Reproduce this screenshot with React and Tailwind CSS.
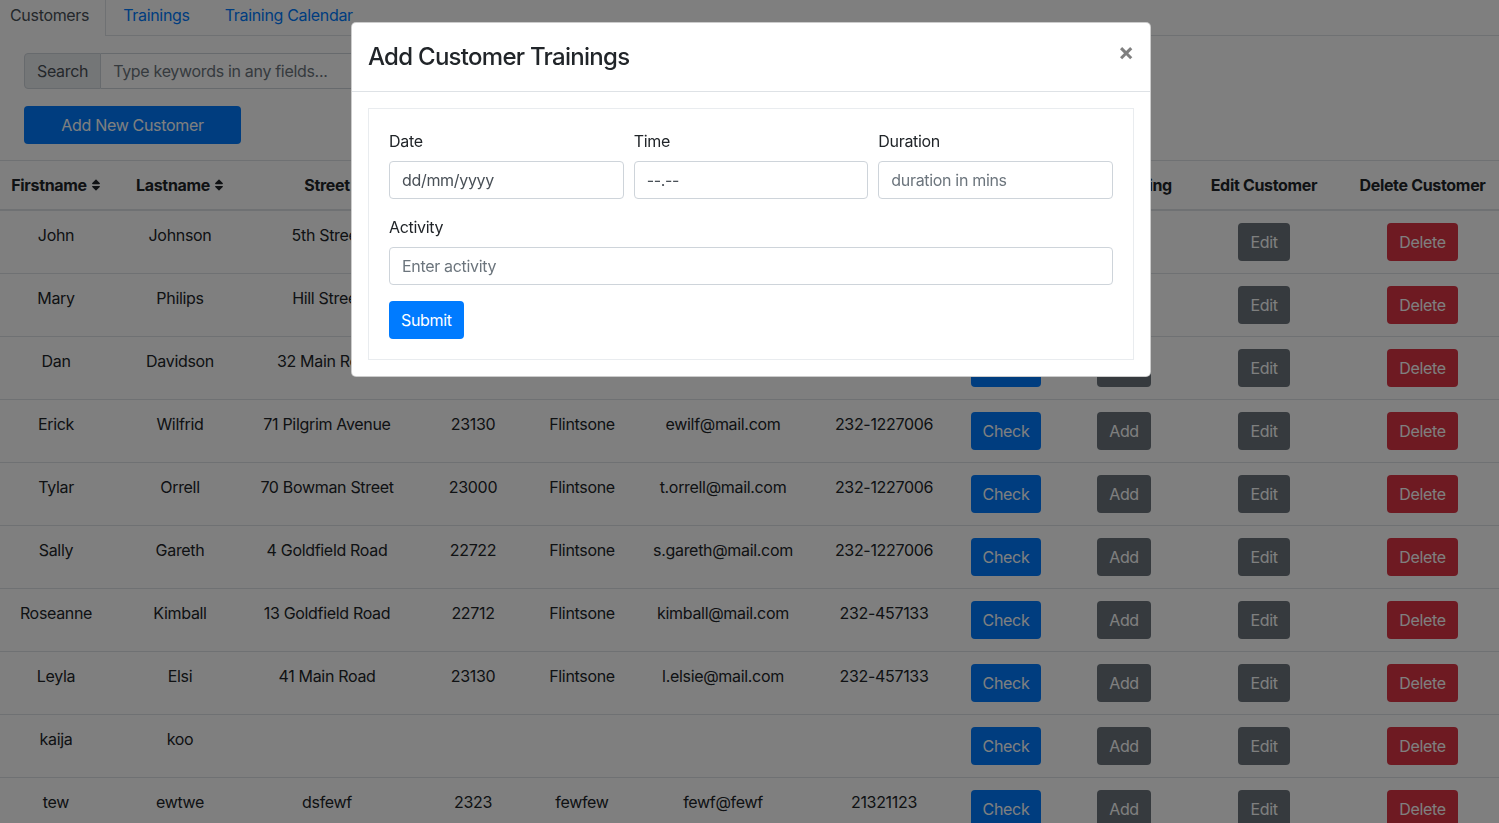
import { FaSort } from "react-icons/fa";

const rows = [
  ["John", "Johnson", "5th Street", "23110", "Flintsone", "john@mail.com", "232-1234567"],
  ["Mary", "Philips", "Hill Street", "23120", "Flintsone", "mary@mail.com", "232-1234567"],
  ["Dan", "Davidson", "32 Main Road", "23130", "Flintsone", "dan@mail.com", "232-1234567"],
  ["Erick", "Wilfrid", "71 Pilgrim Avenue", "23130", "Flintsone", "ewilf@mail.com", "232-1227006"],
  ["Tylar", "Orrell", "70 Bowman Street", "23000", "Flintsone", "t.orrell@mail.com", "232-1227006"],
  ["Sally", "Gareth", "4 Goldfield Road", "22722", "Flintsone", "s.gareth@mail.com", "232-1227006"],
  ["Roseanne", "Kimball", "13 Goldfield Road", "22712", "Flintsone", "kimball@mail.com", "232-457133"],
  ["Leyla", "Elsi", "41 Main Road", "23130", "Flintsone", "l.elsie@mail.com", "232-457133"],
  ["kaija", "koo", "", "", "", "", ""],
  ["tew", "ewtwe", "dsfewf", "2323", "fewfew", "fewf@fewf", "21321123"],
];

const widths = [
  "w-[112px]", "w-[136px]", "w-[158px]", "w-[134px]", "w-[84px]", "w-[198px]",
  "w-[124px]", "w-[120px]", "w-[116px]", "w-[164px]", "w-[153px]",
];

const headers = [
  { label: "Firstname", sort: true },
  { label: "Lastname", sort: true },
  { label: "Street" },
  { label: "Postcode" },
  { label: "City" },
  { label: "Email" },
  { label: "Phone" },
  { label: "Trainings" },
  { label: "Add Training" },
  { label: "Edit Customer" },
  { label: "Delete Customer" },
];

function Btn({ children, className }) {
  return (
    <button className={`h-[38px] rounded-[4px] px-3 text-base leading-6 text-white ${className}`}>
      {children}
    </button>
  );
}

function Field({ label, value, placeholder }) {
  return (
    <div className="flex flex-col">
      <label className="mb-2 text-base leading-6 text-[#212529]">{label}</label>
      <input
        readOnly
        value={value}
        placeholder={placeholder}
        className="h-[38px] w-full rounded-[4px] border border-[#ced4da] bg-white px-3 text-base tracking-[-0.02em] text-[#495057] outline-none placeholder:text-[#6c757d]"
      />
    </div>
  );
}

export default function App() {
  return (
    <div className="relative min-h-screen bg-white font-['Inter',sans-serif] tracking-[-0.02em] text-[#212529]">
      {/* tabs */}
      <nav className="flex h-[36px] border-b border-[#dee2e6] text-base leading-6">
        <span className="-mb-px border-r border-[#dee2e6] bg-white pb-2 pl-[10px] pr-4 pt-[3px] text-[#495057]">
          Customers
        </span>
        <span className="px-4 pl-[17px] pt-[3px] text-[#007bff]">Trainings</span>
        <span className="px-4 pl-[19px] pt-[3px] text-[#007bff]">Training Calendar</span>
      </nav>

      <div className="px-6 pt-[17px]">
        <div className="flex h-[36px] w-[680px]">
          <span className="flex items-center rounded-l-[4px] border border-[#ced4da] bg-[#e9ecef] px-3 text-base text-[#495057]">
            Search
          </span>
          <input
            readOnly
            placeholder="Type keywords in any fields..."
            className="flex-1 rounded-r-[4px] border border-l-0 border-[#ced4da] px-3 text-base tracking-[-0.02em] outline-none placeholder:text-[#6c757d]"
          />
        </div>
        <button className="mt-[17px] h-[38px] w-[217px] rounded-[4px] bg-[#007bff] text-base text-white">
          Add New Customer
        </button>
      </div>

      <table className="mt-4 w-full table-fixed border-collapse text-base leading-6">
        <colgroup>
          {widths.map((w, i) => (
            <col key={i} className={w} />
          ))}
        </colgroup>
        <thead>
          <tr>
            {headers.map((h) => (
              <th
                key={h.label}
                className="whitespace-nowrap border-b-2 border-t border-[#dee2e6] px-2 py-3 text-center align-bottom font-bold"
              >
                {h.label}
                {h.sort && <FaSort className="ml-1 inline-block h-[14px] w-[10px] align-[-1px]" />}
              </th>
            ))}
          </tr>
        </thead>
        <tbody>
          {rows.map((r, i) => (
            <tr key={i}>
              {r.map((c, j) => (
                <td key={j} className="whitespace-nowrap border-t border-[#dee2e6] px-2 py-3 text-center align-top">
                  {c}
                </td>
              ))}
              <td className="border-t border-[#dee2e6] py-3 text-center align-top">
                <Btn className="bg-[#007bff]">Check</Btn>
              </td>
              <td className="border-t border-[#dee2e6] py-3 text-center align-top">
                <Btn className="bg-[#6c757d]">Add</Btn>
              </td>
              <td className="border-t border-[#dee2e6] py-3 text-center align-top">
                <Btn className="bg-[#6c757d]">Edit</Btn>
              </td>
              <td className="border-t border-[#dee2e6] py-3 text-center align-top">
                <Btn className="bg-[#dc3545]">Delete</Btn>
              </td>
            </tr>
          ))}
        </tbody>
      </table>

      {/* modal backdrop */}
      <div className="fixed inset-0 bg-black/50" />

      {/* modal */}
      <div className="fixed left-[351px] top-[22px] w-[800px] rounded-[5px] border border-black/20 bg-white">
        <div className="flex items-start border-b border-[#dee2e6] p-4">
          <h4 className="text-2xl font-medium leading-9 tracking-[-0.03em] text-[#212529]">Add Customer Trainings</h4>
          <button className="-my-1 ml-auto pt-[5px] text-2xl font-bold leading-6 text-black/50">×</button>
        </div>
        <div className="p-4">
          <div className="border border-[#e9ecef] p-5">
            <div className="grid grid-cols-3 gap-[10px]">
              <Field label="Date" value="dd/mm/yyyy" />
              <Field label="Time" value="--.--" />
              <Field label="Duration" placeholder="duration in mins" />
            </div>
            <div className="mt-4">
              <Field label="Activity" placeholder="Enter activity" />
            </div>
            <button className="mt-4 h-[38px] rounded-[4px] bg-[#007bff] px-3 text-base text-white">Submit</button>
          </div>
        </div>
      </div>
    </div>
  );
}
